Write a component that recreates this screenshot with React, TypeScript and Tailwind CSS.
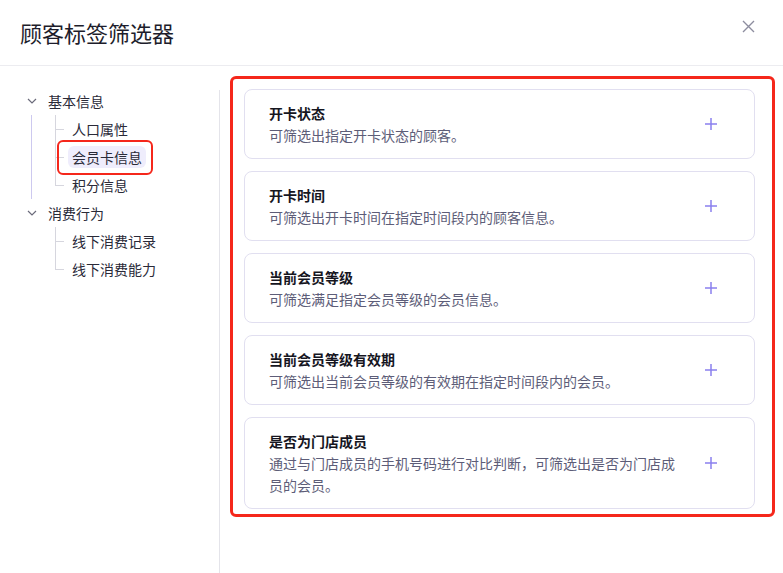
import React from 'react';

const FONT = { fontFamily: '"Noto Sans CJK SC", "Noto Sans", sans-serif' };

const TAGS = [
  { title: '开卡状态', desc: '可筛选出指定开卡状态的顾客。' },
  { title: '开卡时间', desc: '可筛选出开卡时间在指定时间段内的顾客信息。' },
  { title: '当前会员等级', desc: '可筛选满足指定会员等级的会员信息。' },
  { title: '当前会员等级有效期', desc: '可筛选出当前会员等级的有效期在指定时间段内的会员。' },
  { title: '是否为门店成员', desc: '通过与门店成员的手机号码进行对比判断，可筛选出是否为门店成员的会员。' },
];

const TREE = [
  { label: '基本信息', line: true, children: ['人口属性', '会员卡信息', '积分信息'] },
  { label: '消费行为', line: false, children: ['线下消费记录', '线下消费能力'] },
];

const Chevron = () => (
  <svg width="10" height="6" viewBox="0 0 10 6" fill="none">
    <path d="M1 1l4 4 4-4" stroke="#6b6b7b" strokeWidth="1.2" />
  </svg>
);

const ChildRow: React.FC<{ label: string; last: boolean }> = ({ label, last }) => {
  const active = label === '会员卡信息';
  return (
    <div className="flex h-7 items-stretch pl-[23px]">
      <div className="relative w-[9px]">
        <div className={`absolute left-0 top-0 w-px bg-[#d6d6de] ${last ? 'h-1/2' : 'h-full'}`} />
        <div className="absolute left-0 top-1/2 h-px w-[9px] bg-[#d6d6de]" />
      </div>
      <div className="ml-1 flex items-center">
        <div className={`relative rounded-md px-1 leading-[22px] ${active ? 'bg-[#efedfc]' : ''}`}>
          {label}
          {active && (
            <div className="absolute -left-[11px] -right-[7px] -top-[6px] -bottom-[7px] rounded-md border-2 border-[#f5271b]" />
          )}
        </div>
      </div>
    </div>
  );
};

export default function App() {
  return (
    <div className="h-[573px] w-[783px] overflow-hidden bg-white text-[#2a2a38]" style={FONT}>
      {/* Header */}
      <div className="flex h-[66px] items-center justify-between border-b border-[#ececf0] pl-5 pr-7">
        <h1 className="text-[22px] font-normal text-[#1d1d2b]">顾客标签筛选器</h1>
        <svg width="13" height="13" viewBox="0 0 13 13" className="-mt-3">
          <path d="M1 1l11 11M12 1L1 12" stroke="#8d8d9f" strokeWidth="1.4" />
        </svg>
      </div>

      <div className="flex h-[507px]">
        {/* Tree */}
        <div className="w-[219px] pl-6 pt-[21px] text-sm">
          {TREE.map((g) => (
            <div key={g.label}>
              <div className="flex h-7 items-center">
                <div className="flex w-4 justify-center">
                  <Chevron />
                </div>
                <span className="ml-2">{g.label}</span>
              </div>
              <div className={`ml-[7px] ${g.line ? 'border-l border-[#cdc9ef]' : 'border-l border-transparent'}`}>
                {g.children.map((c, i) => (
                  <ChildRow key={c} label={c} last={i === g.children.length - 1} />
                ))}
              </div>
            </div>
          ))}
        </div>
        <div className="mt-6 w-px bg-[#e4e4ea]" />

        {/* Tag list */}
        <div className="ml-[10px] mt-[10px] self-start w-[545px] rounded-md border-[3px] border-[#f5271b] pb-[5px] pl-[11px] pr-[17px] pt-[10px]">
          <div className="flex flex-col gap-3">
            {TAGS.map((t) => (
              <div
                key={t.title}
                className="flex items-center gap-6 rounded-lg border border-[#e1dff0] py-3 pl-6 pr-[37px]"
              >
                <div className="flex-1 text-sm">
                  <div className="font-bold leading-[22px] text-[#16161f]">{t.title}</div>
                  <div className="leading-[22px] text-[#5d5d78]">{t.desc}</div>
                </div>
                <svg width="12" height="12" viewBox="0 0 12 12">
                  <path d="M6 0v12M0 6h12" stroke="#8a80ee" strokeWidth="1.5" />
                </svg>
              </div>
            ))}
          </div>
        </div>
      </div>
    </div>
  );
}
